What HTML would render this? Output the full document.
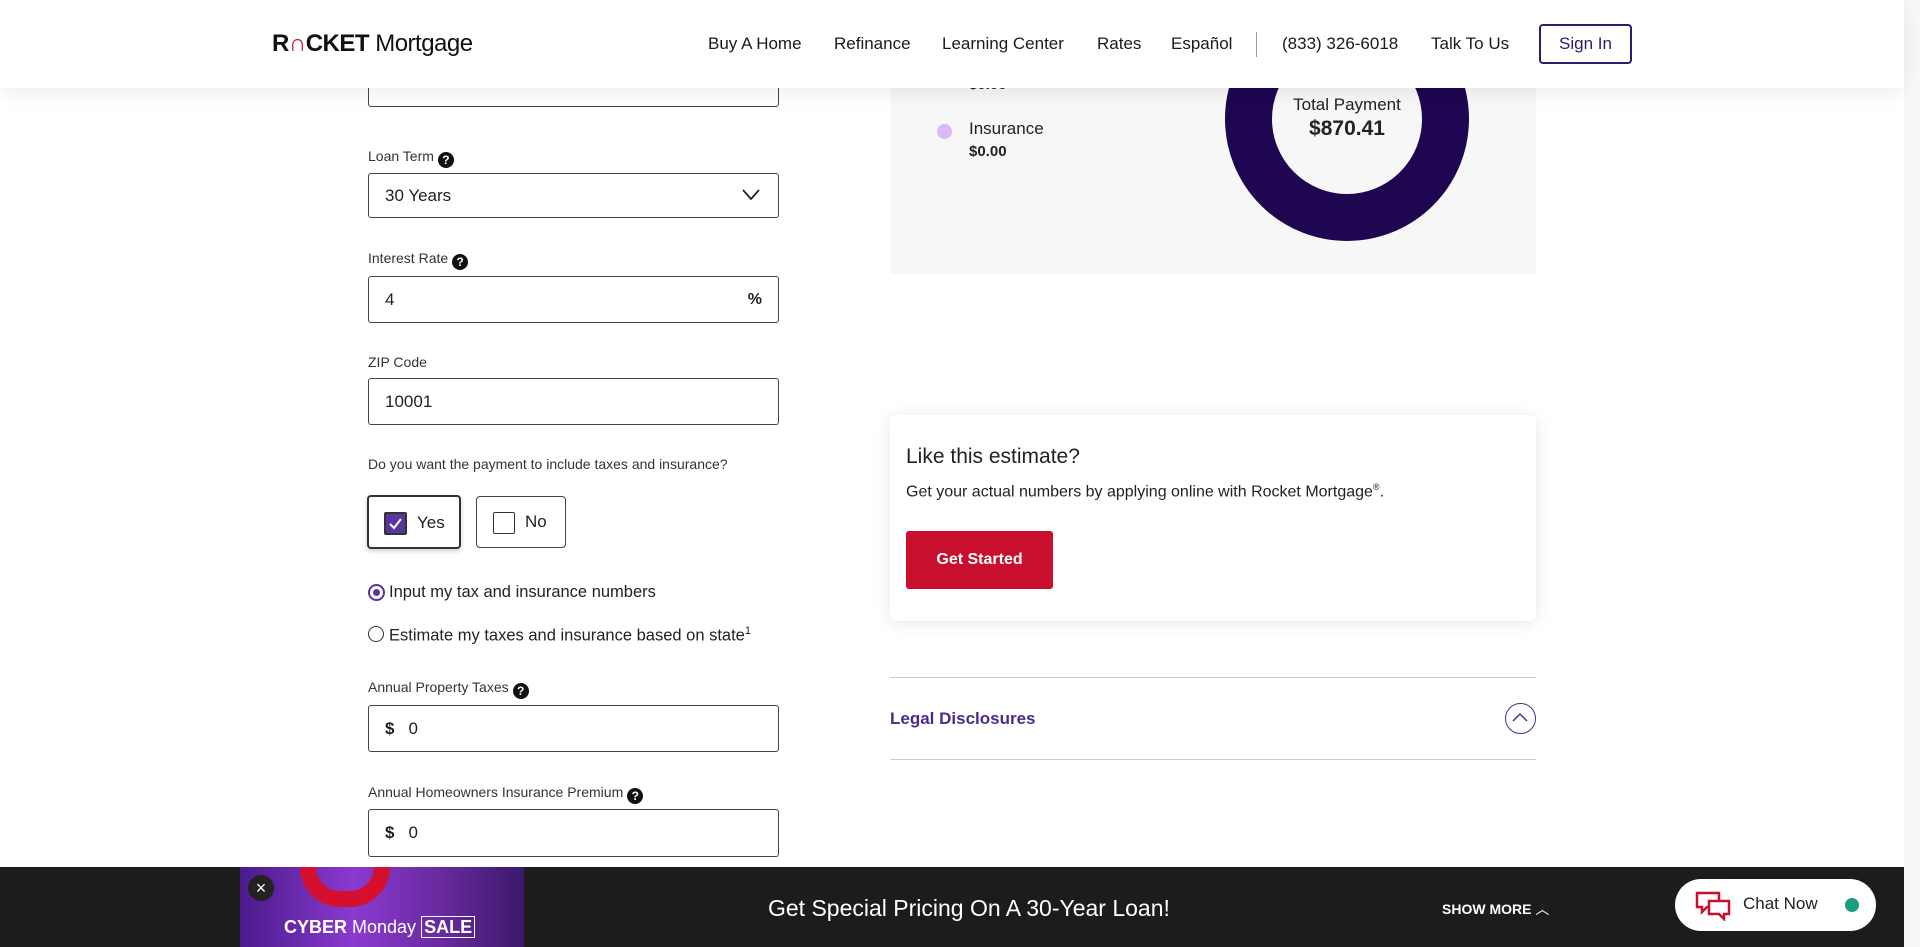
<!DOCTYPE html>
<html><head><meta charset="utf-8"><style>
*{box-sizing:border-box;margin:0;padding:0}
body{width:1920px;height:947px;overflow:hidden;background:#fff;font-family:"Liberation Sans",sans-serif;color:#222;position:relative}
.a{position:absolute}
.hdr{left:0;top:0;width:1904px;height:88px;background:#fff;box-shadow:0 4px 20px rgba(0,0,0,.08);z-index:5}
.nav{font-size:17px;color:#1a1a1a;top:34px}
.lbl{font-size:14px;color:#333}
.q{display:inline-block;width:16px;height:16px;border-radius:50%;background:#111;color:#fff;font-size:12px;font-weight:bold;text-align:center;line-height:16px;vertical-align:-3px;margin-left:4px}
.inp{left:368px;width:411px;border:1px solid #444;border-radius:3px;font-size:17px;padding-left:16px;display:flex;align-items:center;background:#fff}
.sb{right:0;top:0;width:16px;height:947px;background:#f8f8f8}
</style></head><body>
<div class="sb a"></div>
<div class="a inp" style="top:60px;height:47px"></div>
<div class="a lbl" style="left:368px;top:148px">Loan Term<span class="q">?</span></div>
<div class="a inp" style="top:173px;height:45px">30 Years
<svg class="a" style="right:18px;top:15px" width="18" height="12" viewBox="0 0 18 12"><path d="M1 1l8 9 8-9" fill="none" stroke="#222" stroke-width="1.8"/></svg></div>
<div class="a lbl" style="left:368px;top:250px">Interest Rate<span class="q">?</span></div>
<div class="a inp" style="top:276px;height:47px">4<b class="a" style="right:16px;font-size:16px">%</b></div>
<div class="a lbl" style="left:368px;top:354px">ZIP Code</div>
<div class="a inp" style="top:378px;height:47px">10001</div>
<div class="a lbl" style="left:368px;top:456px">Do you want the payment to include taxes and insurance?</div>
<div class="a" style="left:367px;top:495px;width:94px;height:54px;border:2px solid #333;border-radius:4px;box-shadow:0 2px 5px rgba(0,0,0,.2);font-size:17px">
<div class="a" style="left:15px;top:15px;width:23px;height:23px;background:#5a35a0;border:2px solid #333;border-radius:2px"><svg width="19" height="19" viewBox="0 0 19 19"><path d="M4 10l4 4 7-9" fill="none" stroke="#fff" stroke-width="2"/></svg></div>
<span class="a" style="left:48px;top:16px">Yes</span></div>
<div class="a" style="left:476px;top:496px;width:90px;height:52px;border:1px solid #444;border-radius:4px;font-size:17px">
<div class="a" style="left:16px;top:15px;width:22px;height:22px;border:1.5px solid #333;border-radius:2px"></div>
<span class="a" style="left:48px;top:15px">No</span></div>
<div class="a" style="left:368px;top:584px;width:17px;height:17px;border:2px solid #5a35a0;border-radius:50%"><div style="margin:3px;width:7px;height:7px;border-radius:50%;background:#5a35a0"></div></div>
<div class="a" style="left:389px;top:583px;font-size:16.5px">Input my tax and insurance numbers</div>
<div class="a" style="left:368px;top:626px;width:16px;height:16px;border:1.5px solid #333;border-radius:50%"></div>
<div class="a" style="left:389px;top:625px;font-size:16.5px">Estimate my taxes and insurance based on state<sup style="font-size:11px">1</sup></div>
<div class="a lbl" style="left:368px;top:679px">Annual Property Taxes<span class="q">?</span></div>
<div class="a inp" style="top:705px;height:47px"><b style="margin-right:14px">$</b>0</div>
<div class="a lbl" style="left:368px;top:784px">Annual Homeowners Insurance Premium<span class="q">?</span></div>
<div class="a inp" style="top:809px;height:48px"><b style="margin-right:14px">$</b>0</div>
<div class="a" style="left:890px;top:0;width:646px;height:274px;background:#f7f7f7"></div>
<div class="a" style="left:969px;top:76px;font-size:15px;font-weight:bold">$0.00</div>
<div class="a" style="left:937px;top:124px;width:15px;height:15px;border-radius:50%;background:#dbb8f7"></div>
<div class="a" style="left:969px;top:119px;font-size:17px">Insurance</div>
<div class="a" style="left:969px;top:143px;font-size:15px;font-weight:bold">$0.00</div>
<div class="a" style="left:1225px;top:-3px;width:244px;height:244px;border-radius:50%;border:47px solid #1e0650"></div>
<div class="a" style="left:1247px;top:95px;width:200px;text-align:center;font-size:17px">Total Payment</div>
<div class="a" style="left:1247px;top:117px;width:200px;text-align:center;font-size:21px;font-weight:bold">$870.41</div>
<div class="a" style="left:890px;top:415px;width:646px;height:206px;background:#fff;border-radius:6px;box-shadow:0 2px 16px rgba(0,0,0,.1)">
<div class="a" style="left:16px;top:30px;font-size:21px">Like this estimate?</div>
<div class="a" style="left:16px;top:67px;font-size:16px">Get your actual numbers by applying online with Rocket Mortgage<sup style="font-size:9px">®</sup>.</div>
<div class="a" style="left:16px;top:116px;width:147px;height:58px;background:#c8102e;border-radius:3px;color:#fff;font-size:16px;font-weight:bold;text-align:center;line-height:58px">Get Started</div></div>
<div class="a" style="left:890px;top:677px;width:646px;border-top:1px solid #ccc"></div>
<div class="a" style="left:890px;top:709px;font-size:17px;font-weight:bold;color:#4a2c8f">Legal Disclosures</div>
<div class="a" style="left:1505px;top:703px;width:31px;height:31px;border:1.5px solid #4a2c8f;border-radius:50%"><svg width="28" height="28" viewBox="0 0 28 28"><path d="M7 17l7-7 7 7" fill="none" stroke="#4a2c8f" stroke-width="1.5"/></svg></div>
<div class="a" style="left:890px;top:759px;width:646px;border-top:1px solid #ccc"></div>
<div class="a hdr">
<div class="a" style="left:272px;top:30px;font-size:24px;letter-spacing:-0.5px"><b style="color:#111">R<span style="color:#c8102e">∩</span>CKET</b> <span style="color:#111">Mortgage</span></div>
<div class="a nav" style="left:708px">Buy A Home</div>
<div class="a nav" style="left:834px">Refinance</div>
<div class="a nav" style="left:942px">Learning Center</div>
<div class="a nav" style="left:1097px">Rates</div>
<div class="a nav" style="left:1171px">Español</div>
<div class="a" style="left:1256px;top:32px;width:1px;height:25px;background:#999"></div>
<div class="a nav" style="left:1282px">(833) 326-6018</div>
<div class="a nav" style="left:1431px">Talk To Us</div>
<div class="a" style="left:1539px;top:24px;width:93px;height:40px;border:2px solid #2e1a6e;border-radius:4px;color:#2e1a6e;font-size:17px;text-align:center;line-height:36px">Sign In</div>
</div>
<div class="a" style="left:0;top:867px;width:1904px;height:80px;background:#1d1c1b;z-index:6">
<div class="a" style="left:240px;top:0;width:284px;height:80px;background:linear-gradient(90deg,#4a1a8a,#8a3ad0 40%,#6a2aa0 70%,#3a1a6a)">
<div class="a" style="left:60px;top:0;width:90px;height:40px;border:16px solid #d4102e;border-top:none;border-radius:0 0 50px 50px"></div>
<div class="a" style="left:8px;top:8px;width:26px;height:26px;border-radius:50%;background:#222;color:#fff;text-align:center;line-height:26px;font-size:18px">×</div>
<div class="a" style="left:44px;top:50px;color:#fff;font-size:18px"><b>CYBER</b> Monday <b style="border:1px solid #fff;padding:0 2px">SALE</b></div></div>
<div class="a" style="left:768px;top:28px;color:#fff;font-size:23px">Get Special Pricing On A 30-Year Loan!</div>
<div class="a" style="left:1442px;top:32px;color:#fff;font-size:14px;font-weight:bold">SHOW MORE <span style="font-weight:normal">︿</span></div>
<div class="a" style="left:1675px;top:12px;width:201px;height:52px;background:#fff;border-radius:26px">
<svg class="a" style="left:20px;top:12px" width="36" height="30" viewBox="0 0 36 30"><path d="M2 2h22v14H12l-5 5v-5H2z" fill="none" stroke="#c8102e" stroke-width="2.5"/><path d="M14 10h20v13h-5v5l-5-5H14z" fill="#fff" stroke="#c8102e" stroke-width="2.5"/></svg>
<div class="a" style="left:68px;top:15px;font-size:17px;color:#222">Chat Now</div>
<div class="a" style="left:170px;top:19px;width:14px;height:14px;border-radius:50%;background:#1a9e80"></div></div>
</div>
</body></html>
